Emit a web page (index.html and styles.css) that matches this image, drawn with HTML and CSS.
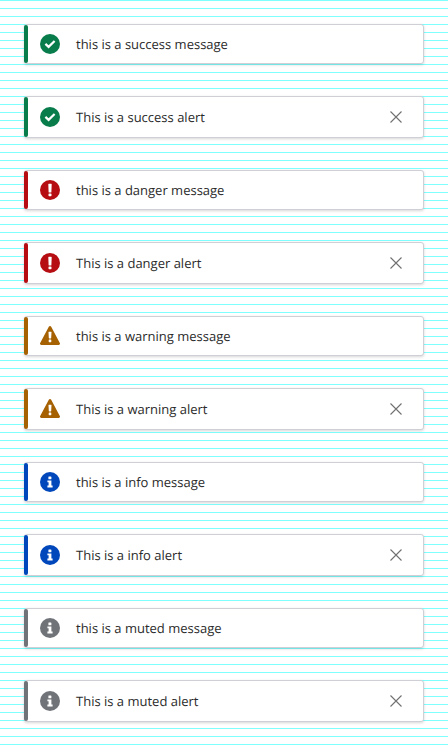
FILE: index.html
```html
<!DOCTYPE html>
<html lang="en">
<head>
<meta charset="utf-8">
<meta name="viewport" content="width=device-width, initial-scale=1">
<title>Alerts</title>
<link rel="stylesheet" href="styles.css">
</head>
<body>
<svg class="sprite" aria-hidden="true">
  <symbol id="success" viewBox="0 0 20 20"><circle cx="10" cy="10" r="10" fill="currentColor"/><path d="M5.4 9.9l3.2 3 6-5.9" fill="none" stroke="#fff" stroke-width="2.2"/></symbol>
  <symbol id="danger" viewBox="0 0 20 20"><circle cx="10" cy="10" r="10" fill="currentColor"/><path d="M8.3 4.3q0-.5.5-.5h2.4q.5 0 .5.5l-.3 7.6q0 .5-.5.5H9.1q-.5 0-.5-.5z" fill="#fff"/><rect x="8.5" y="13.4" width="3" height="2.8" rx=".6" fill="#fff"/></symbol>
  <symbol id="warning" viewBox="0 0 20 20"><path d="M8.8 .7a1.4 1.4 0 0 1 2.4 0l8.6 16.2a1.4 1.4 0 0 1-1.2 2.1H1.4A1.4 1.4 0 0 1 .2 16.9z" fill="currentColor"/><path d="M8.5 6.1q0-.4.4-.4h2.2q.4 0 .4.4l-.3 6q0 .4-.4.4H9.2q-.4 0-.4-.4z" fill="#fff"/><rect x="8.7" y="13.6" width="2.6" height="2.6" rx=".4" fill="#fff"/></symbol>
  <symbol id="info" viewBox="0 0 20 20"><circle cx="10" cy="10" r="10" fill="currentColor"/><rect x="8.4" y="4.6" width="3" height="2.7" rx=".5" fill="#fff"/><path d="M7.4 8.4h4v5.2h1.2v1.8H7.4v-1.8h1.2v-3.4H7.4z" fill="#fff"/></symbol>
  <symbol id="close" viewBox="0 0 12 12"><path d="M.5.5l11 11M11.5.5l-11 11" fill="none" stroke="currentColor" stroke-width="1.1"/></symbol>
</svg>
<main class="alerts">
  <div class="alert success"><svg class="icon" aria-hidden="true"><use href="#success"/></svg><p class="text">this is a success message</p></div>
  <div class="alert success closable" role="alert"><svg class="icon" aria-hidden="true"><use href="#success"/></svg><p class="text">This is a success alert</p><button class="close" type="button" aria-label="Close"><svg class="cross"><use href="#close"/></svg></button></div>
  <div class="alert danger"><svg class="icon" aria-hidden="true"><use href="#danger"/></svg><p class="text">this is a danger message</p></div>
  <div class="alert danger closable" role="alert"><svg class="icon" aria-hidden="true"><use href="#danger"/></svg><p class="text">This is a danger alert</p><button class="close" type="button" aria-label="Close"><svg class="cross"><use href="#close"/></svg></button></div>
  <div class="alert warning"><svg class="icon" aria-hidden="true"><use href="#warning"/></svg><p class="text">this is a warning message</p></div>
  <div class="alert warning closable" role="alert"><svg class="icon" aria-hidden="true"><use href="#warning"/></svg><p class="text">This is a warning alert</p><button class="close" type="button" aria-label="Close"><svg class="cross"><use href="#close"/></svg></button></div>
  <div class="alert info"><svg class="icon" aria-hidden="true"><use href="#info"/></svg><p class="text">this is a info message</p></div>
  <div class="alert info closable" role="alert"><svg class="icon" aria-hidden="true"><use href="#info"/></svg><p class="text">This is a info alert</p><button class="close" type="button" aria-label="Close"><svg class="cross"><use href="#close"/></svg></button></div>
  <div class="alert muted"><svg class="icon" aria-hidden="true"><use href="#info"/></svg><p class="text">this is a muted message</p></div>
  <div class="alert muted closable" role="alert"><svg class="icon" aria-hidden="true"><use href="#info"/></svg><p class="text">This is a muted alert</p><button class="close" type="button" aria-label="Close"><svg class="cross"><use href="#close"/></svg></button></div>
</main>
</body>
</html>
```
FILE: styles.css
```css
* {
  box-sizing: border-box;
}

body {
  margin: 0;
  background: #fff repeating-linear-gradient(to bottom, #80ffff 0, #80ffff 1px, #fff 1px, #fff 8px);
  color: #2b2b2b;
  font: 13px/20px "Open Sans", sans-serif;
  text-rendering: geometricPrecision;
}

.sprite {
  display: none;
}

.alerts {
  display: flex;
  flex-direction: column;
  gap: 32px;
  padding: 24px;
}

.alert {
  position: relative;
  display: flex;
  align-items: center;
  gap: 16px;
  padding: 9px 15px;
  background: #fff;
  border: 1px solid #ced0d6;
  border-radius: 3px;
  box-shadow: 0 1px 3px rgba(0, 0, 0, 0.16);
}

.alert::before {
  content: "";
  position: absolute;
  top: 0;
  bottom: 0;
  left: -1px;
  width: 4px;
  border-radius: 2px;
  background: var(--tone);
}

.closable {
  padding: 8px 15px;
}

.success { --tone: #087d4b; }
.danger { --tone: #b50d12; }
.warning { --tone: #a66102; }
.info { --tone: #0047bb; }
.muted { --tone: #707479; }

.icon {
  flex: none;
  width: 20px;
  height: 20px;
  color: var(--tone);
}

.text {
  flex: 1;
  margin: 0;
}

.close {
  display: flex;
  align-items: center;
  justify-content: center;
  width: 24px;
  height: 24px;
  padding: 0;
  border: 0;
  background: none;
  color: #707070;
  cursor: pointer;
}

.cross {
  width: 12px;
  height: 12px;
}
```
